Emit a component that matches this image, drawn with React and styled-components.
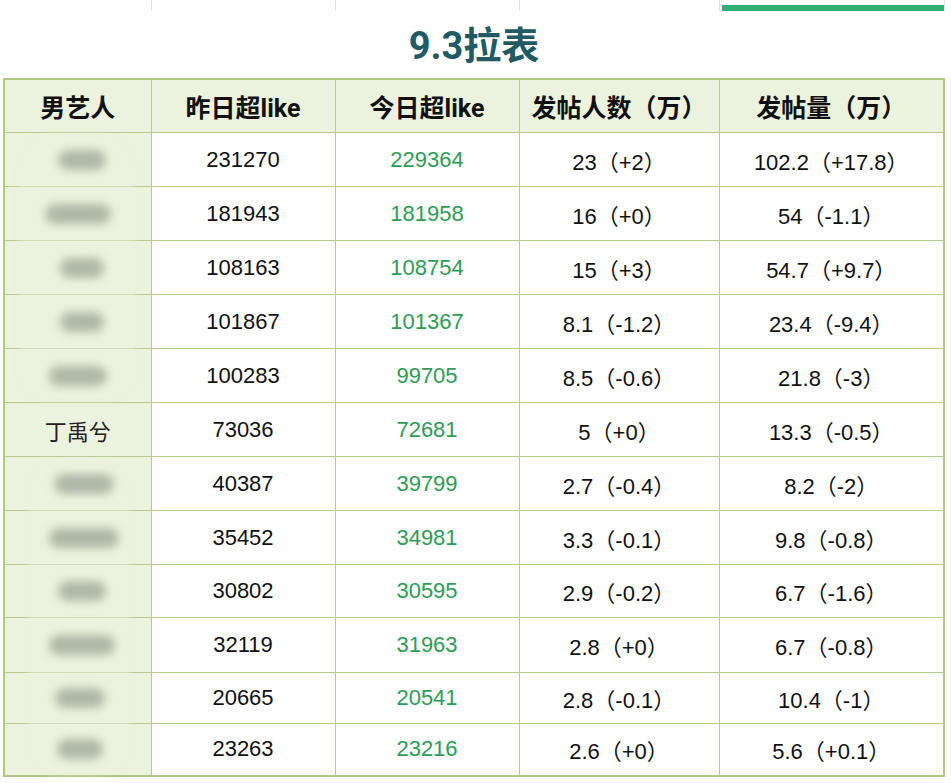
import React from "react";
import styled, { createGlobalStyle } from "styled-components";

const Global = createGlobalStyle`
  html, body { margin: 0; padding: 0; background: #ffffff; }
  body { font-family: "Liberation Sans", "Noto Sans CJK SC", sans-serif; }
`;

const Page = styled.div`
  width: 951px;
  height: 783px;
  overflow: hidden;
  background: #fff;
  padding-left: 3px;
  box-sizing: border-box;
`;

const TopStrip = styled.div`
  display: flex;
  height: 11px;
`;

const StripCell = styled.div`
  width: ${(p) => p.$w}px;
  box-sizing: border-box;
  border-right: 1px solid #e2e4e2;
  display: flex;
  align-items: flex-end;
`;

const StripBar = styled.div`
  width: 100%;
  height: 6px;
  margin-left: 2px;
  background: #2faf74;
`;

const Title = styled.h1`
  margin: 0;
  height: 67px;
  display: flex;
  align-items: center;
  justify-content: center;
  padding-right: 6px;
  padding-bottom: 4px;
  box-sizing: border-box;
  font-family: Roboto, "Noto Sans CJK SC", sans-serif;
  font-weight: 700;
  font-size: 38px;
  color: #225a64;
`;

const TableWrap = styled.div`
  position: relative;
  width: 942px;
`;

const Table = styled.table`
  border-collapse: collapse;
  table-layout: fixed;
  width: 942px;
  border: 2px solid #b0c683;
`;

const Th = styled.th`
  height: 52px;
  padding: 0;
  background: #ebf2dd;
  border: 1.5px solid #b6ca8e;
  font-family: Roboto, "Noto Sans CJK SC", sans-serif;
  font-weight: 700;
  font-size: 25px;
  color: #111;
  text-align: center;
  vertical-align: middle;
`;

const Tr = styled.tr`
  height: ${(p) => p.$h}px;
`;

const Td = styled.td`
  padding: 0;
  border: 1.5px solid #b6ca8e;
  text-align: center;
  vertical-align: middle;
  font-family: "Liberation Sans", "Noto Sans CJK SC", sans-serif;
  font-size: 22px;
  color: ${(p) => (p.$green ? "#2c9d55" : "#111")};
  background: ${(p) => (p.$name ? "#ebf2dd" : "#fff")};
`;

const NameText = styled.span`
  font-family: "Noto Sans CJK SC", sans-serif;
  font-size: 22px;
  color: #222;
`;

const Blur = styled.div`
  width: ${(p) => p.$w}px;
  height: 20px;
  margin: 0 auto;
  transform: translateX(${(p) => p.$dx}px);
  border-radius: 10px;
  background: #7d8679;
  filter: blur(5px);
`;

const Veil = styled.div`
  position: absolute;
  left: ${(p) => p.$l}px;
  top: ${(p) => p.$t}px;
  width: ${(p) => p.$w}px;
  height: ${(p) => p.$h}px;
  border-radius: ${(p) => p.$r};
  background: rgba(236, 243, 225, 0.45);
  box-shadow: 0 0 6px 2px rgba(236, 243, 225, 0.5);
  pointer-events: none;
`;

const cols = [147, 184, 184, 200, 225];
const headers = ["男艺人", "昨日超like", "今日超like", "发帖人数（万）", "发帖量（万）"];

const rows = [
  { blur: [48, 4], y: "231270", t: "229364", p: "23（+2）", q: "102.2（+17.8）", h: 54 },
  { blur: [66, 0], y: "181943", t: "181958", p: "16（+0）", q: "54（-1.1）", h: 54 },
  { blur: [44, 4], y: "108163", t: "108754", p: "15（+3）", q: "54.7（+9.7）", h: 54 },
  { blur: [44, 4], y: "101867", t: "101367", p: "8.1（-1.2）", q: "23.4（-9.4）", h: 54 },
  { blur: [58, 0], y: "100283", t: "99705", p: "8.5（-0.6）", q: "21.8（-3）", h: 54 },
  { name: "丁禹兮", y: "73036", t: "72681", p: "5（+0）", q: "13.3（-0.5）", h: 54 },
  { blur: [60, 6], y: "40387", t: "39799", p: "2.7（-0.4）", q: "8.2（-2）", h: 54 },
  { blur: [70, 6], y: "35452", t: "34981", p: "3.3（-0.1）", q: "9.8（-0.8）", h: 54 },
  { blur: [48, 4], y: "30802", t: "30595", p: "2.9（-0.2）", q: "6.7（-1.6）", h: 53 },
  { blur: [66, 4], y: "32119", t: "31963", p: "2.8（+0）", q: "6.7（-0.8）", h: 55 },
  { blur: [50, 2], y: "20665", t: "20541", p: "2.8（-0.1）", q: "10.4（-1）", h: 51 },
  { blur: [46, 2], y: "23263", t: "23216", p: "2.6（+0）", q: "5.6（+0.1）", h: 52 },
];

export default function App() {
  return (
    <>
      <Global />
      <Page>
        <TopStrip>
          {cols.map((w, i) => (
            <StripCell key={i} $w={i === 0 ? w + 2 : w}>
              {i === 4 && <StripBar />}
            </StripCell>
          ))}
        </TopStrip>
        <Title>9.3拉表</Title>
        <TableWrap>
          <Table>
            <colgroup>
              {cols.map((w, i) => (
                <col key={i} style={{ width: w }} />
              ))}
            </colgroup>
            <thead>
              <tr>
                {headers.map((h) => (
                  <Th key={h}>{h}</Th>
                ))}
              </tr>
            </thead>
            <tbody>
              {rows.map((r, i) => (
                <Tr key={i} $h={r.h}>
                  <Td $name>
                    {r.name ? <NameText>{r.name}</NameText> : <Blur $w={r.blur[0]} $dx={r.blur[1]} />}
                  </Td>
                  <Td>{r.y}</Td>
                  <Td $green>{r.t}</Td>
                  <Td>{r.p}</Td>
                  <Td>{r.q}</Td>
                </Tr>
              ))}
            </tbody>
          </Table>
          <Veil $l={18} $t={58} $w={112} $h={262} $r="40px 40px 30px 30px" />
          <Veil $l={28} $t={384} $w={96} $h={310} $r="34px 40px 30px 30px" />
        </TableWrap>
      </Page>
    </>
  );
}
